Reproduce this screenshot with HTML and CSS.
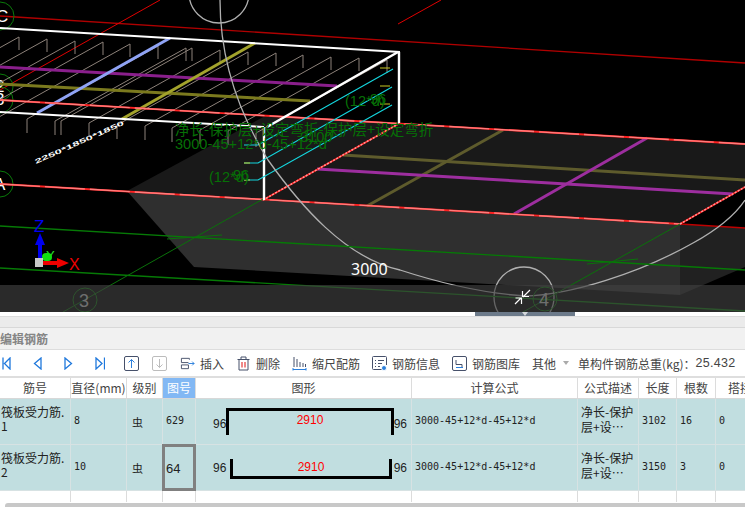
FILE: index.html
```html
<!DOCTYPE html>
<html lang="zh">
<head>
<meta charset="utf-8">
<title>编辑钢筋</title>
<link rel="stylesheet" href="styles.css">
</head>
<body>
<div class="page">
  <svg class="scene" viewBox="0 0 745 312" width="745" height="312">
    <polygon class="slab-top" points="127,191 267,115 745,144 745,187 680,224"/>
    <polygon class="slab-front" points="127,191 680,224 680,295 194,267"/>
    <polygon class="slab-side" points="680,224 745,228 745,267 680,295"/>

    <line class="l-darkred" x1="0" y1="16" x2="745" y2="63"/>
    <line class="l-red" x1="160" y1="0" x2="0" y2="90"/>
    <line class="l-red" x1="441" y1="0" x2="398" y2="24"/>

    <circle class="axis" cx="0" cy="16" r="14"/>
    <circle class="axis" cx="0" cy="87" r="13"/>
    <circle class="axis" cx="0" cy="100" r="13"/>
    <circle class="axis" cx="0" cy="184" r="13"/>
    <text class="axis-label" x="-4" y="22">C</text>
    <text class="axis-label" x="-5" y="92">2</text>
    <text class="axis-label" x="-5" y="105">3</text>
    <text class="axis-label" x="-6" y="190">A</text>

    <path class="l-tie" d="M19 50V37L-112 110v14M47 52V39L-84 112v14M75 54V41L-56 114v14M103 55V42L-28 115v14M130 57V44L-1 117v14M158 59V46L27 119v14M186 61V48L55 121v14M192 61V48L61 121v14M220 63V50L89 123v14M248 65V52L117 125v14M276 66V53L145 126v14M303 68V55L172 128v14M331 70V57L200 130v14M359 71V58L228 131v14M387 73V60L256 133v14"/>

    <line class="l-purple" x1="0" y1="67" x2="337" y2="86"/>
    <line class="l-olive" x1="0" y1="84" x2="310" y2="101"/>
    <line class="l-blue" x1="170" y1="38" x2="37" y2="113"/>
    <line class="l-yellow" x1="255" y1="43" x2="122" y2="119"/>

    <line class="l-olive-dim" x1="343" y1="155" x2="745" y2="180"/>
    <line class="l-olive-dim" x1="503" y1="130" x2="367" y2="206"/>
    <line class="l-purple-lit" x1="317" y1="169" x2="733" y2="194"/>
    <line class="l-purple-lit" x1="647" y1="138" x2="514" y2="214"/>

    <line class="l-red-base" x1="0" y1="100" x2="745" y2="144"/>
    <line class="l-pink" x1="0" y1="100" x2="745" y2="144"/>
    <line class="l-red-base" x1="0" y1="184" x2="680" y2="224"/>
    <line class="l-pink" x1="0" y1="184" x2="680" y2="224"/>
    <line class="l-darkred2" x1="680" y1="224" x2="745" y2="228"/>
    <line class="l-red-base" x1="263" y1="200" x2="400" y2="123"/>
    <line class="l-pink-dash" x1="263" y1="200" x2="400" y2="123"/>
    <line class="l-red-base" x1="680" y1="224" x2="745" y2="187"/>
    <line class="l-pink-dash" x1="680" y1="224" x2="745" y2="187"/>

    <path class="l-white" d="M0 28L400 52M0 112L264 127"/>
    <path class="l-white-thick" d="M398 52L267 127M264 127V200M399 52V123"/>

    <path class="l-cyan" d="M393 69L258 145H244M392 87L258 163H244M392 105L258 180H244"/>
    <path class="l-stub" d="M244 163H250M244 180H250M380 68H390M380 86H390M380 104H390"/>

    <path class="l-gray" d="M220 0C220 60 240 115 268 160C300 205 345 258 400 270C440 283 480 293 525 296C570 295 640 273 693 243C720 228 735 215 745 200"/>
    <circle class="l-gray" cx="219" cy="-7" r="30"/>
    <circle class="l-gray" cx="524" cy="297" r="30"/>

    <line class="l-green" x1="0" y1="226" x2="745" y2="270"/>
    <line class="l-green" x1="0" y1="268" x2="745" y2="311"/>
    <line class="l-green-thin" x1="263" y1="199" x2="63" y2="312"/>
    <line class="l-green-thin" x1="680" y1="224" x2="523" y2="312"/>
    <line class="l-green-thin" x1="167" y1="239" x2="222" y2="235"/>
    <line class="l-green-thin" x1="587" y1="264" x2="638" y2="259"/>

    <circle class="axis" cx="85" cy="300" r="12"/>
    <circle class="axis" cx="545" cy="299" r="12"/>
    <text class="grid-label" x="79" y="307">3</text>
    <text class="grid-label" x="539" y="306">4</text>

    <rect class="band" x="0" y="285" width="745" height="27"/>

    <text class="dim" x="175" y="135">净长-保护层+设定弯折-保护层+设定弯折</text>
    <text class="dim-latin" x="175" y="149">3000-45+12*d-45+12*d</text>
    <text class="dim-latin" x="300" y="142">3100</text>
    <text class="dim-latin" x="345" y="106">(12*d)</text>
    <text class="dim-latin" x="370" y="104">96</text>
    <text class="dim-latin" x="209" y="182">(12*d)</text>
    <text class="dim-latin" x="233" y="180">96</text>

    <text class="size-label" x="351" y="275">3000</text>
    <text class="slant-label" transform="translate(36 164) rotate(-24) scale(1 .5)">2250*1850*1850</text>

    <text class="gizmo-z" x="34" y="232">Z</text>
    <text class="gizmo-y" x="46" y="260">Y</text>
    <text class="gizmo-x" x="69" y="270">X</text>
    <path class="gizmo-blue" d="M40 233L35 245H38V258H42V245H45Z"/>
    <rect class="gizmo-green" x="42" y="253" width="10" height="8" rx="4"/>
    <path class="gizmo-red" d="M42 261H57V258L69 263L57 268V265H42Z"/>
    <rect class="gizmo-box" x="35" y="258" width="8" height="9"/>

    <path class="cursor" d="M530 290L523 297M529 296.5H522.5V291M515 304L521 298M515.5 298H521.5V304"/>
  </svg>

  <div class="splitter"><div class="handle"></div></div>
  <div class="gap-band"></div>
  <div class="title-bar">编辑钢筋</div>

  <div class="toolbar">
    <div class="nav">
      <svg class="ic-nav" viewBox="0 0 9 13"><path d="M1 .5V12.5M8 1L2.5 6.5L8 12Z"/></svg>
      <svg class="ic-nav" viewBox="0 0 9 13"><path d="M8 1L1.5 6.5L8 12Z"/></svg>
      <svg class="ic-nav" viewBox="0 0 9 13"><path d="M1 1L7.5 6.5L1 12Z"/></svg>
      <svg class="ic-nav ic-last" viewBox="0 0 10 13"><path d="M1 1L7 6.5L1 12ZM9.5 .5V12.5"/></svg>
    </div>
    <svg class="ic-move" viewBox="0 0 15 15"><rect x=".5" y=".5" width="14" height="14" rx="1.5"/><path class="acc" d="M7.5 12V3.5M4.5 6.5L7.5 3.5L10.5 6.5"/></svg>
    <svg class="ic-move is-off" viewBox="0 0 15 15"><rect x=".5" y=".5" width="14" height="14" rx="1.5"/><path d="M7.5 3V11.5M4.5 8.5L7.5 11.5L10.5 8.5"/></svg>
    <div class="tool t-insert">
      <svg class="ic" viewBox="0 0 16 14"><path d="M10 3V1.5H1.5V6H9M1.5 8.5H9V12.5H1.5Z"/><path class="acc" d="M9 7H15M13 5L15 7L13 9"/></svg>
      <span>插入</span>
    </div>
    <div class="tool t-delete">
      <svg class="ic" viewBox="0 0 14 15"><path d="M1 3.5H13M2.5 3.5V14H11.5V3.5M4.5 3.5V1H9.5V3.5"/><path class="acc-red" d="M5.5 6V11.5M8.5 6V11.5"/></svg>
      <span>删除</span>
    </div>
    <div class="tool t-scale">
      <svg class="ic" viewBox="0 0 14 15"><path d="M1.5 1V11M4.5 3V11M7.5 6V11M10.5 7V11M13 8V11"/><path class="acc" d="M.5 13.5H13.5M.5 12V14.5M13.5 12V14.5"/></svg>
      <span>缩尺配筋</span>
    </div>
    <div class="tool t-info">
      <svg class="ic" viewBox="0 0 15 15"><path d="M11 13.5H1.5Q.5 13.5 .5 12.5V1.5Q.5 .5 1.5 .5H13.5Q14.5 .5 14.5 1.5V9M3 4.5H4M6 4.5H12M3 7.5H4M6 7.5H10M3 10.5H4M6 10.5H8"/><circle class="acc-fill" cx="12" cy="12" r="2.5"/></svg>
      <span>钢筋信息</span>
    </div>
    <div class="tool t-lib">
      <svg class="ic" viewBox="0 0 15 15"><rect x=".5" y=".5" width="14" height="14" rx="1.5"/><path d="M4 4V8.5H10V11"/><path class="acc" d="M4 11.5H11"/></svg>
      <span>钢筋图库</span>
    </div>
    <div class="tool t-more"><span>其他</span><i class="caret"></i></div>
    <div class="total"><span>单构件钢筋总重(kg)：</span><span class="total-num">25.432</span></div>
  </div>

  <div class="row head">
    <div class="cell">筋号</div>
    <div class="cell">直径(mm)</div>
    <div class="cell">级别</div>
    <div class="cell is-active">图号</div>
    <div class="cell">图形</div>
    <div class="cell">计算公式</div>
    <div class="cell">公式描述</div>
    <div class="cell">长度</div>
    <div class="cell">根数</div>
    <div class="cell clip">搭接</div>
  </div>

  <div class="row data">
    <div class="cell name">筏板受力筋.<br>1</div>
    <div class="cell num pad-d">8</div>
    <div class="cell grade">虫</div>
    <div class="cell num pad-d">629</div>
    <div class="cell shape shape-up">
      <span>96</span>
      <div class="bar bar-up">2910</div>
      <span>96</span>
    </div>
    <div class="cell num formula">3000-45+12*d-45+12*d</div>
    <div class="cell desc">净长-保护<br>层+设…</div>
    <div class="cell num pad-d">3102</div>
    <div class="cell num pad-d">16</div>
    <div class="cell num pad-d">0</div>
  </div>

  <div class="row data">
    <div class="cell name">筏板受力筋.<br>2</div>
    <div class="cell num pad-d">10</div>
    <div class="cell grade">虫</div>
    <div class="cell num pad-d is-selected">64</div>
    <div class="cell shape">
      <span>96</span>
      <div class="bar bar-down">2910</div>
      <span>96</span>
    </div>
    <div class="cell num formula">3000-45+12*d-45+12*d</div>
    <div class="cell desc">净长-保护<br>层+设…</div>
    <div class="cell num pad-d">3150</div>
    <div class="cell num pad-d">3</div>
    <div class="cell num pad-d">0</div>
  </div>

  <div class="row filler">
    <div class="cell"></div><div class="cell"></div><div class="cell"></div><div class="cell"></div><div class="cell"></div>
    <div class="cell"></div><div class="cell"></div><div class="cell"></div><div class="cell"></div><div class="cell"></div>
  </div>
  <div class="hscroll"></div>
</div>
</body>
</html>
```

FILE: styles.css
```css
* { box-sizing: border-box; }
html, body { margin: 0; padding: 0; background: #fff; }
body { font-family: "Noto Sans CJK SC", "Liberation Sans", sans-serif; font-size: 12px; color: #333; }
.page { width: 745px; height: 507px; overflow: hidden; display: flex; flex-direction: column; }

/* 3D view */
.scene { display: block; flex: none; background: #000; }
.scene line, .scene path, .scene circle { fill: none; }
.slab-top { fill: #191919; }
.slab-front { fill: #2f2f2f; }
.slab-side { fill: #212121; }
.l-darkred { stroke: #b00000; stroke-width: 1.3; }
.l-darkred2 { stroke: #c00000; stroke-width: 1.3; }
.l-red { stroke: #e00000; stroke-width: 1; }
.l-red-base { stroke: #ff2020; stroke-width: 1.8; }
.l-pink { stroke: #ff7c7c; stroke-width: 1.4; stroke-dasharray: 40 5; }
.l-pink-dash { stroke: #ff9a9a; stroke-width: 1.5; stroke-dasharray: 2 1.5; }
.l-tie { stroke: #8d827a; stroke-width: 1; }
.l-purple { stroke: #8a1f8c; stroke-width: 3; }
.l-olive { stroke: #7b7a1e; stroke-width: 3; }
.l-blue { stroke: #8fa3f5; stroke-width: 3; }
.l-yellow { stroke: #a3a32c; stroke-width: 3; }
.l-olive-dim { stroke: #5e5b2c; stroke-width: 3; }
.l-purple-lit { stroke: #9d2e9f; stroke-width: 3; }
.l-white { stroke: #fff; stroke-width: 2; }
.l-white-thick { stroke: #fff; stroke-width: 2.4; }
.l-cyan { stroke: #14d6de; stroke-width: 1.2; }
.l-stub { stroke: #c8c820; stroke-width: 1.2; }
.l-gray { stroke: #b0b0b0; stroke-width: 1.3; }
.l-green { stroke: #067a06; stroke-width: 1.3; }
.l-green-thin { stroke: #0a720a; stroke-width: 1; }
.axis { stroke: #0a7a0a; stroke-width: 1; }
.axis-label { fill: #fff; font: 17px "Liberation Sans", sans-serif; }
.grid-label { fill: #c8c8c8; font: 18px "Liberation Sans", sans-serif; }
.band { fill: #404040; fill-opacity: .66; }
.dim { fill: #067006; font: 14.5px "Noto Sans CJK SC", sans-serif; }
.dim-latin { fill: #067006; font: 14.6px "Liberation Sans", sans-serif; }
.size-label { fill: #fff; font: 16px "Noto Sans", sans-serif; }
.slant-label { fill: #fff; font: bold 13px "Liberation Sans", sans-serif; }
.gizmo-z { fill: #0000f0; font: 17px "Liberation Sans", sans-serif; }
.gizmo-y { fill: #28e028; font: 13px "Liberation Sans", sans-serif; }
.gizmo-x { fill: #f00000; font: 16px "Liberation Sans", sans-serif; }
.scene .gizmo-blue { fill: #0000f0; }
.gizmo-green { fill: #10e010; }
.scene .gizmo-red { fill: #f00000; }
.gizmo-box { fill: #c8c8c8; }
.cursor { stroke: #fff; stroke-width: 1.2; }

/* splitter and title */
.splitter { flex: none; height: 4px; background: #fff; }
.handle { width: 100px; height: 4px; margin-left: 475px; background: #6c7a8a; display: flex; justify-content: center; }
.handle::after { content: ""; width: 0; height: 0; border: 3px solid transparent; border-top: 4px solid #d5d8dc; border-bottom: 0; }
.gap-band { flex: none; height: 12px; background: #ebebeb; border-top: 1px solid #dcdcdc; border-bottom: 1px solid #d8d8d8; }
.title-bar { flex: none; height: 22px; padding-top: 1px; background: #f1f1f1; border-bottom: 1px solid #ddd; color: #858585; font-weight: 700; line-height: 19px; }

/* toolbar */
.toolbar { flex: none; height: 28px; display: flex; align-items: center; background: #fff; border-bottom: 2px solid #dedede; white-space: nowrap; color: #444; }
.nav { display: flex; width: 105px; margin-left: 2px; gap: 22px; }
.ic-nav { width: 9px; height: 13px; flex: none; fill: none; stroke: #1f78dc; stroke-width: 1.3; }
.ic-last { width: 10px; }
.ic-move { width: 15px; height: 15px; flex: none; fill: none; stroke: #46506a; stroke-width: 1; margin-left: 17px; }
.ic-move + .ic-move { margin-left: 13px; }
.ic-move.is-off { stroke: #bcbcbc; }
.ic-move .acc { stroke: #2b7fdc; }
.tool { display: flex; align-items: center; }
.ic { height: 15px; width: 15px; flex: none; fill: none; stroke: #46506a; stroke-width: 1; }
.ic .acc { stroke: #2b7fdc; }
.ic .acc-red { stroke: #e01010; }
.ic .acc-fill { fill: #2b7fdc; stroke: #fff; }
.t-insert { margin-left: 13px; gap: 5px; }
.t-delete { margin-left: 12px; gap: 5px; }
.t-scale { margin-left: 12px; gap: 5px; }
.t-info { margin-left: 12px; gap: 5px; }
.t-lib { margin-left: 12px; gap: 5px; }
.t-more { margin-left: 12px; gap: 7px; }
.caret { width: 0; height: 0; border: 3px solid transparent; border-top: 4px solid #aaa; border-bottom: 0; }
.total { margin-left: 9px; display: flex; }
.total-num { font: 12.5px "Liberation Sans", sans-serif; line-height: 17px; letter-spacing: .3px; }

/* table */
.row { flex: none; display: grid; grid-template-columns: 71px 56px 36px 33px 216px 166px 61px 38px 39px 29px; }
.cell { border-right: 1px solid #dcdcdc; overflow: hidden; white-space: nowrap; }
.cell:last-child { border-right: 0; }
.head { height: 21px; background: #fff; border-bottom: 1px solid #d8d8d8; }
.head .cell { text-align: center; line-height: 20px; color: #444; }
.head .is-active { background: #82b8f4; color: #fff; }
.head .clip { text-align: left; padding-left: 12px; }
.data { height: 46px; background: #c1dee0; border-bottom: 1px solid #d7e2e3; color: #222; }
.data .cell { border-right-color: #d7e2e3; display: flex; align-items: center; }
.data .name { display: block; padding: 6px 0 0 1px; line-height: 14px; }
.num { font: 10px "DejaVu Sans Mono", monospace; padding-bottom: 2px; }
.pad-d { padding-left: 3px; }
.grade { padding-left: 5px; font-size: 11px; }
.is-selected { border: 3px solid #808080; margin: -1px 0 -1px -1px; padding: 2px 0 0 1px; font: 13px "Liberation Sans", sans-serif; }
.data .is-selected { border-color: #808080; }
.shape { padding: 0 4px 0 17px; font: 12px "Liberation Sans", sans-serif; }
.shape-up span { margin-top: 4px; }
.bar { flex: 1; color: #f00; text-align: center; border: 0 solid #000; border-width: 0 3px; }
.bar-up { height: 27px; border-top-width: 3px; margin-top: -1px; line-height: 18px; }
.bar-down { height: 20px; border-bottom-width: 3px; line-height: 16px; margin: 2px 2px 0 4px; }
.formula { padding-left: 3px; }
.desc { display: block !important; padding: 5px 0 0 3px; line-height: 15px; }
.filler { height: 11px; background: #fff; }
.hscroll { flex: none; height: 4px; margin: 1px 0 0 5px; background: #c8c8c8; border-radius: 3px 0 0 0; }
```
